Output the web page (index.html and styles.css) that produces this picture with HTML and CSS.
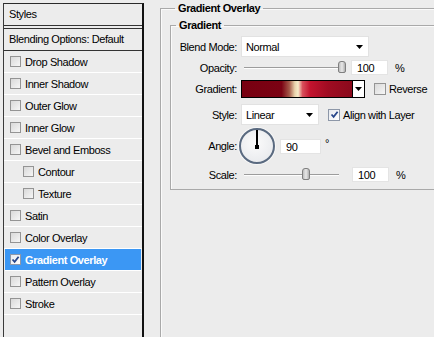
FILE: index.html
```html
<!DOCTYPE html>
<html>
<head>
  <meta charset="utf-8">
  <title>Layer Style</title>
  <link rel="stylesheet" href="styles.css">
</head>
<body>

  <div class="styles-panel">
    <div class="style-head">Styles</div>
    <div class="style-blend">Blending Options: Default</div>
    <ul class="style-list">
      <li><span class="check"></span>Drop Shadow</li>
      <li><span class="check"></span>Inner Shadow</li>
      <li><span class="check"></span>Outer Glow</li>
      <li><span class="check"></span>Inner Glow</li>
      <li><span class="check"></span>Bevel and Emboss</li>
      <li class="sub"><span class="check"></span>Contour</li>
      <li class="sub"><span class="check"></span>Texture</li>
      <li><span class="check"></span>Satin</li>
      <li><span class="check"></span>Color Overlay</li>
      <li class="active">
        <span class="check checked">
          <svg width="9" height="9" viewBox="0 0 9 9"><path d="M1.5 4.5 L3.6 6.8 L7.6 1.8" fill="none" stroke="#27468a" stroke-width="1.8"/></svg>
        </span>Gradient Overlay
      </li>
      <li><span class="check"></span>Pattern Overlay</li>
      <li><span class="check"></span>Stroke</li>
    </ul>
  </div>

  <div class="options">
    <fieldset class="group outer">
      <legend>Gradient Overlay</legend>
      <fieldset class="group inner">
        <legend>Gradient</legend>

        <div class="row row-blend">
          <label>Blend Mode:</label>
          <div class="select select-wide">
            <span>Normal</span>
            <svg width="7" height="4" viewBox="0 0 7 4"><polygon points="0,0 7,0 3.5,4" fill="#000"/></svg>
          </div>
        </div>

        <div class="row row-opacity">
          <label>Opacity:</label>
          <div class="slider"><span class="thumb" style="left: 94px"></span></div>
          <div class="field">100</div>
          <span class="unit">%</span>
        </div>

        <div class="row row-gradient">
          <label>Gradient:</label>
          <div class="gradient">
            <div class="gradient-bar"></div>
            <div class="gradient-drop">
              <svg width="7" height="4" viewBox="0 0 7 4"><polygon points="0,0 7,0 3.5,4" fill="#000"/></svg>
            </div>
          </div>
          <span class="check box-reverse"></span>
          <span class="check-label">Reverse</span>
        </div>

        <div class="row row-style">
          <label>Style:</label>
          <div class="select select-short">
            <span>Linear</span>
            <svg width="7" height="4" viewBox="0 0 7 4"><polygon points="0,0 7,0 3.5,4" fill="#000"/></svg>
          </div>
          <span class="check checked box-align">
            <svg width="9" height="9" viewBox="0 0 9 9"><path d="M1.5 4.5 L3.6 6.8 L7.6 1.8" fill="none" stroke="#27468a" stroke-width="1.8"/></svg>
          </span>
          <span class="check-label">Align with Layer</span>
        </div>

        <div class="row row-angle">
          <label>Angle:</label>
          <div class="dial">
            <span class="dial-hand"></span>
            <span class="dial-dot"></span>
          </div>
          <div class="field field-angle">90</div>
          <span class="degree">&deg;</span>
        </div>

        <div class="row row-scale">
          <label>Scale:</label>
          <div class="slider"><span class="thumb" style="left: 58px"></span></div>
          <div class="field field-scale">100</div>
          <span class="unit">%</span>
        </div>
      </fieldset>
    </fieldset>
  </div>

</body>
</html>
```

FILE: styles.css
```css
body {
  margin: 0;
  height: 337px;
  overflow: hidden;
  display: flex;
  align-items: flex-start;
  background: #ececec;
  color: #000;
  font: 11px "Liberation Sans", Arial, sans-serif;
  letter-spacing: -0.4px;
  white-space: nowrap;
}

/* ======== left list ======== */
.styles-panel {
  flex: none;
  margin: 3px 0 0 3px;
  width: 138px;
  height: 333px;
  border-top: 1px solid #2a2a2a;
  border-left: 1px solid #3a3a3a;
  border-right: 2px solid #111;
}
.style-head {
  height: 21px;
  line-height: 21px;
  padding-left: 5px;
  border-bottom: 4px double #333;
}
.style-blend {
  height: 21px;
  line-height: 21px;
  padding-left: 5px;
  border-bottom: 1px solid #333;
}
.style-list {
  margin: 0;
  padding: 0;
  list-style: none;
}
.style-list li {
  display: flex;
  align-items: center;
  height: 21px;
  padding-left: 6px;
  border-bottom: 1px solid #fff;
}
.style-list li.sub {
  padding-left: 19px;
}
.style-list li.active {
  margin: 0 1px;
  padding-left: 5px;
  background: #3b97f4;
  color: #fff;
  font-weight: bold;
}

.check {
  display: inline-flex;
  align-items: center;
  justify-content: center;
  flex: none;
  width: 11px;
  height: 11px;
  margin-right: 4px;
  box-sizing: border-box;
  border: 1px solid #949494;
  background: linear-gradient(135deg, #d9d9d9, #f6f6f6);
}
.check.checked {
  border-color: #8d97a8;
  background: linear-gradient(135deg, #e6e9ee, #fff);
}

/* ======== right side ======== */
.options {
  flex: 1;
  min-width: 0;
  margin-left: 16px;
}
.group {
  margin: 0;
  min-width: 0;
  border: 1px solid #a9a9a9;
  border-right: none;
  box-shadow: inset 1px 1px 0 #fafafa;
}
.group legend {
  margin-left: 5px;
  padding: 0 3px;
  line-height: 13px;
  font-weight: bold;
}
.outer {
  margin-top: 2px;
  height: 335px;
  box-sizing: border-box;
  padding: 0 0 0 9px;
  border-bottom: none;
}
.inner {
  margin-top: 4px;
  padding: 4px 0 6px 0;
}

.row {
  display: flex;
  align-items: center;
}
.row label {
  width: 66px;
  margin-right: 4px;
  text-align: right;
}
.row-blend { height: 21px; }
.row-opacity { height: 17px; margin-top: 2px; }
.row-gradient { height: 18px; margin-top: 4px; }
.row-style { height: 21px; margin-top: 6px; }
.row-angle { height: 38px; margin-top: 2px; }
.row-scale { height: 17px; margin-top: 1px; }

.select {
  display: flex;
  align-items: center;
  justify-content: space-between;
  height: 21px;
  box-sizing: border-box;
  padding: 0 5px 0 4px;
  border: 1px solid #e2e2e2;
  background: #fff;
}
.select-wide { width: 128px; }
.select-short { width: 78px; }

.slider {
  position: relative;
  width: 103px;
  height: 13px;
  margin-left: 3px;
}
.slider::before {
  content: "";
  position: absolute;
  left: 0;
  right: 8px;
  top: 6px;
  border-top: 1px solid #9c9c9c;
  border-bottom: 1px solid #fdfdfd;
}
.thumb {
  position: absolute;
  top: 0;
  width: 8px;
  height: 12px;
  box-sizing: border-box;
  border: 1px solid #7f7f7f;
  border-radius: 3px 3px 2px 2px;
  background: linear-gradient(90deg, #bdbdbd, #e8e8e8 50%, #b0b0b0);
}

.field {
  width: 37px;
  height: 15px;
  line-height: 15px;
  box-sizing: border-box;
  margin-left: 4px;
  padding-left: 5px;
  border: 1px solid #e4e4e4;
  background: #fff;
}
.unit {
  margin-left: 7px;
}

.gradient {
  display: flex;
  height: 18px;
  box-sizing: border-box;
  border: 1px solid #000;
}
.gradient-bar {
  width: 110px;
  background: linear-gradient(90deg, #780011 0%, #7b0213 36%, #a45848 43%, #e9d2ac 48%, #f6ecc9 51%, #d9505c 55%, #c3132e 62%, #a00c22 78%, #8a0a1c 100%);
}
.gradient-drop {
  display: flex;
  align-items: center;
  justify-content: center;
  width: 11px;
  border-left: 1px solid #000;
  background: #fff;
}
.box-reverse {
  width: 12px;
  height: 12px;
  margin-left: 9px;
  margin-right: 3px;
}
.box-align {
  width: 12px;
  height: 12px;
  margin-left: 9px;
  margin-right: 3px;
}

.dial {
  position: relative;
  width: 36px;
  height: 36px;
  margin-left: -2px;
  box-sizing: border-box;
  border: 2px solid #5a6a80;
  border-radius: 50%;
  background: radial-gradient(circle at 45% 40%, #fbfbfb, #e4e6ea);
  box-shadow: 0 0 0 1px #f7f7f7;
}
.dial-hand {
  position: absolute;
  left: 15px;
  top: 0;
  width: 2px;
  height: 16px;
  background: #000;
}
.dial-dot {
  position: absolute;
  left: 14px;
  top: 15px;
  width: 4px;
  height: 4px;
  background: #000;
}
.field-angle {
  width: 41px;
  margin-left: 5px;
}
.degree {
  align-self: flex-start;
  margin: 10px 0 0 4px;
}
.field-scale {
  margin-left: 5px;
}
```
